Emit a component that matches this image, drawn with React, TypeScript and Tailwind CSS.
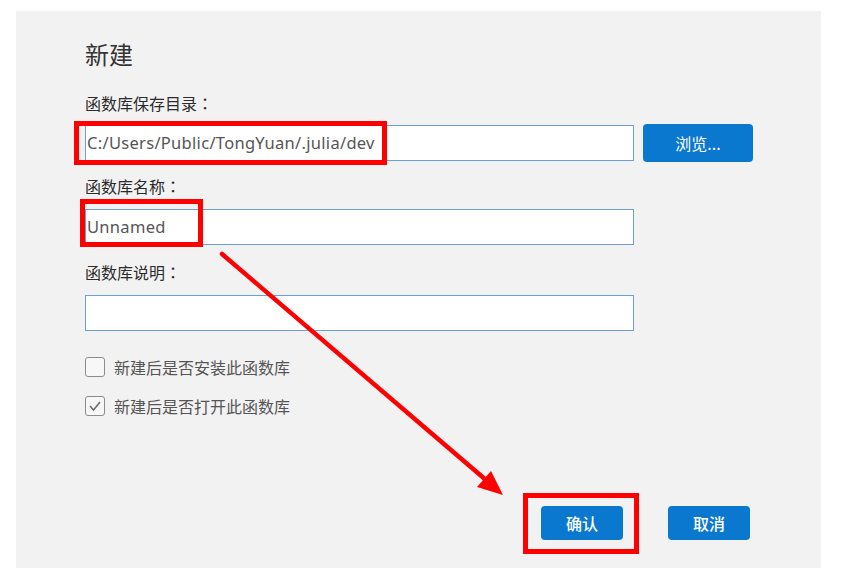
import React from "react";

const cjk = { fontFamily: '"Noto Sans CJK SC", "Noto Sans", sans-serif' };
const latin = { fontFamily: '"Noto Sans", "Noto Sans CJK SC", sans-serif', letterSpacing: "0.3px" };
const colon = { fontFamily: '"Noto Sans CJK TC", sans-serif' };

function Label({ text, className }: { text: string; className: string }) {
  return (
    <div className={`${className} text-[16px] leading-[20px] text-[#2b2b2b]`} style={cjk}>
      {text}
      <span style={colon}>：</span>
    </div>
  );
}

function Checkbox({ checked, label }: { checked: boolean; label: string }) {
  return (
    <div className="flex items-center h-[20px]">
      <div className="w-[20px] h-[20px] rounded-[3px] border-[1.5px] border-[#8c8c8c] bg-[#f7f7f7] flex items-center justify-center">
        {checked && (
          <svg width="14" height="14" viewBox="0 0 14 14">
            <polyline points="2,7 5.5,11 12,3" fill="none" stroke="#6b6b6b" strokeWidth="1.5" />
          </svg>
        )}
      </div>
      <span className="ml-[9px] text-[16px] leading-[20px] text-[#555]" style={cjk}>
        {label}
      </span>
    </div>
  );
}

export default function App() {
  return (
    <div className="relative w-[865px] h-[579px] bg-white pt-[11px] pl-[16px]">
      <div className="w-[805px] h-[557px] bg-[#f2f2f2] pl-[69px] pr-[68px] pt-[30px] flex flex-col">
        <div className="text-[24px] leading-[26px] text-[#333]" style={cjk}>新建</div>

        <Label className="mt-[26px]" text="函数库保存目录" />
        <div className="mt-[11px] flex items-center h-[38px]">
          <div className="shrink-0 w-[549px] h-[36px] border border-[#6b9fd8] bg-white flex items-center pl-[1px] text-[16.5px] text-[#555]" style={latin}>
            C:/Users/Public/TongYuan/.julia/dev
          </div>
          <button className="shrink-0 ml-[9px] w-[110px] h-[38px] rounded-[4px] bg-[#0b78cf] text-white text-[16px]" style={cjk}>
            浏览...
          </button>
        </div>

        <Label className="mt-[14px]" text="函数库名称" />
        <div className="mt-[13px] w-[549px] h-[36px] border border-[#6b9fd8] bg-white flex items-center pl-[1px] text-[16.5px] text-[#555]" style={latin}>
          Unnamed
        </div>

        <Label className="mt-[17px]" text="函数库说明" />
        <div className="mt-[13px] w-[549px] h-[36px] border border-[#6b9fd8] bg-white" />

        <div className="mt-[26px]">
          <Checkbox checked={false} label="新建后是否安装此函数库" />
        </div>
        <div className="mt-[19px]">
          <Checkbox checked={true} label="新建后是否打开此函数库" />
        </div>

        <div className="mt-[90px] flex justify-end gap-[45px] pr-[3px]">
          <button className="w-[82px] h-[34px] rounded-[4px] bg-[#0b78cf] text-white text-[16px] font-medium" style={cjk}>确认</button>
          <button className="w-[82px] h-[34px] rounded-[4px] bg-[#0b78cf] text-white text-[16px] font-medium" style={cjk}>取消</button>
        </div>
      </div>

      {/* annotation overlays */}
      <div className="absolute left-[74px] top-[121px] w-[313px] h-[44px] border-[5px] border-[#ff0000]" />
      <div className="absolute left-[80px] top-[199px] w-[123px] h-[48px] border-[5px] border-[#ff0000]" />
      <div className="absolute left-[523px] top-[493px] w-[116px] h-[61px] border-[5px] border-[#ff0000]" />
      <svg className="absolute left-0 top-0 pointer-events-none" width="865" height="579">
        <line x1="222" y1="254" x2="486" y2="480" stroke="#ff0000" strokeWidth="4.5" strokeLinecap="round" />
        <polygon points="503,495 477,487 491,471" fill="#ff0000" />
      </svg>
    </div>
  );
}
